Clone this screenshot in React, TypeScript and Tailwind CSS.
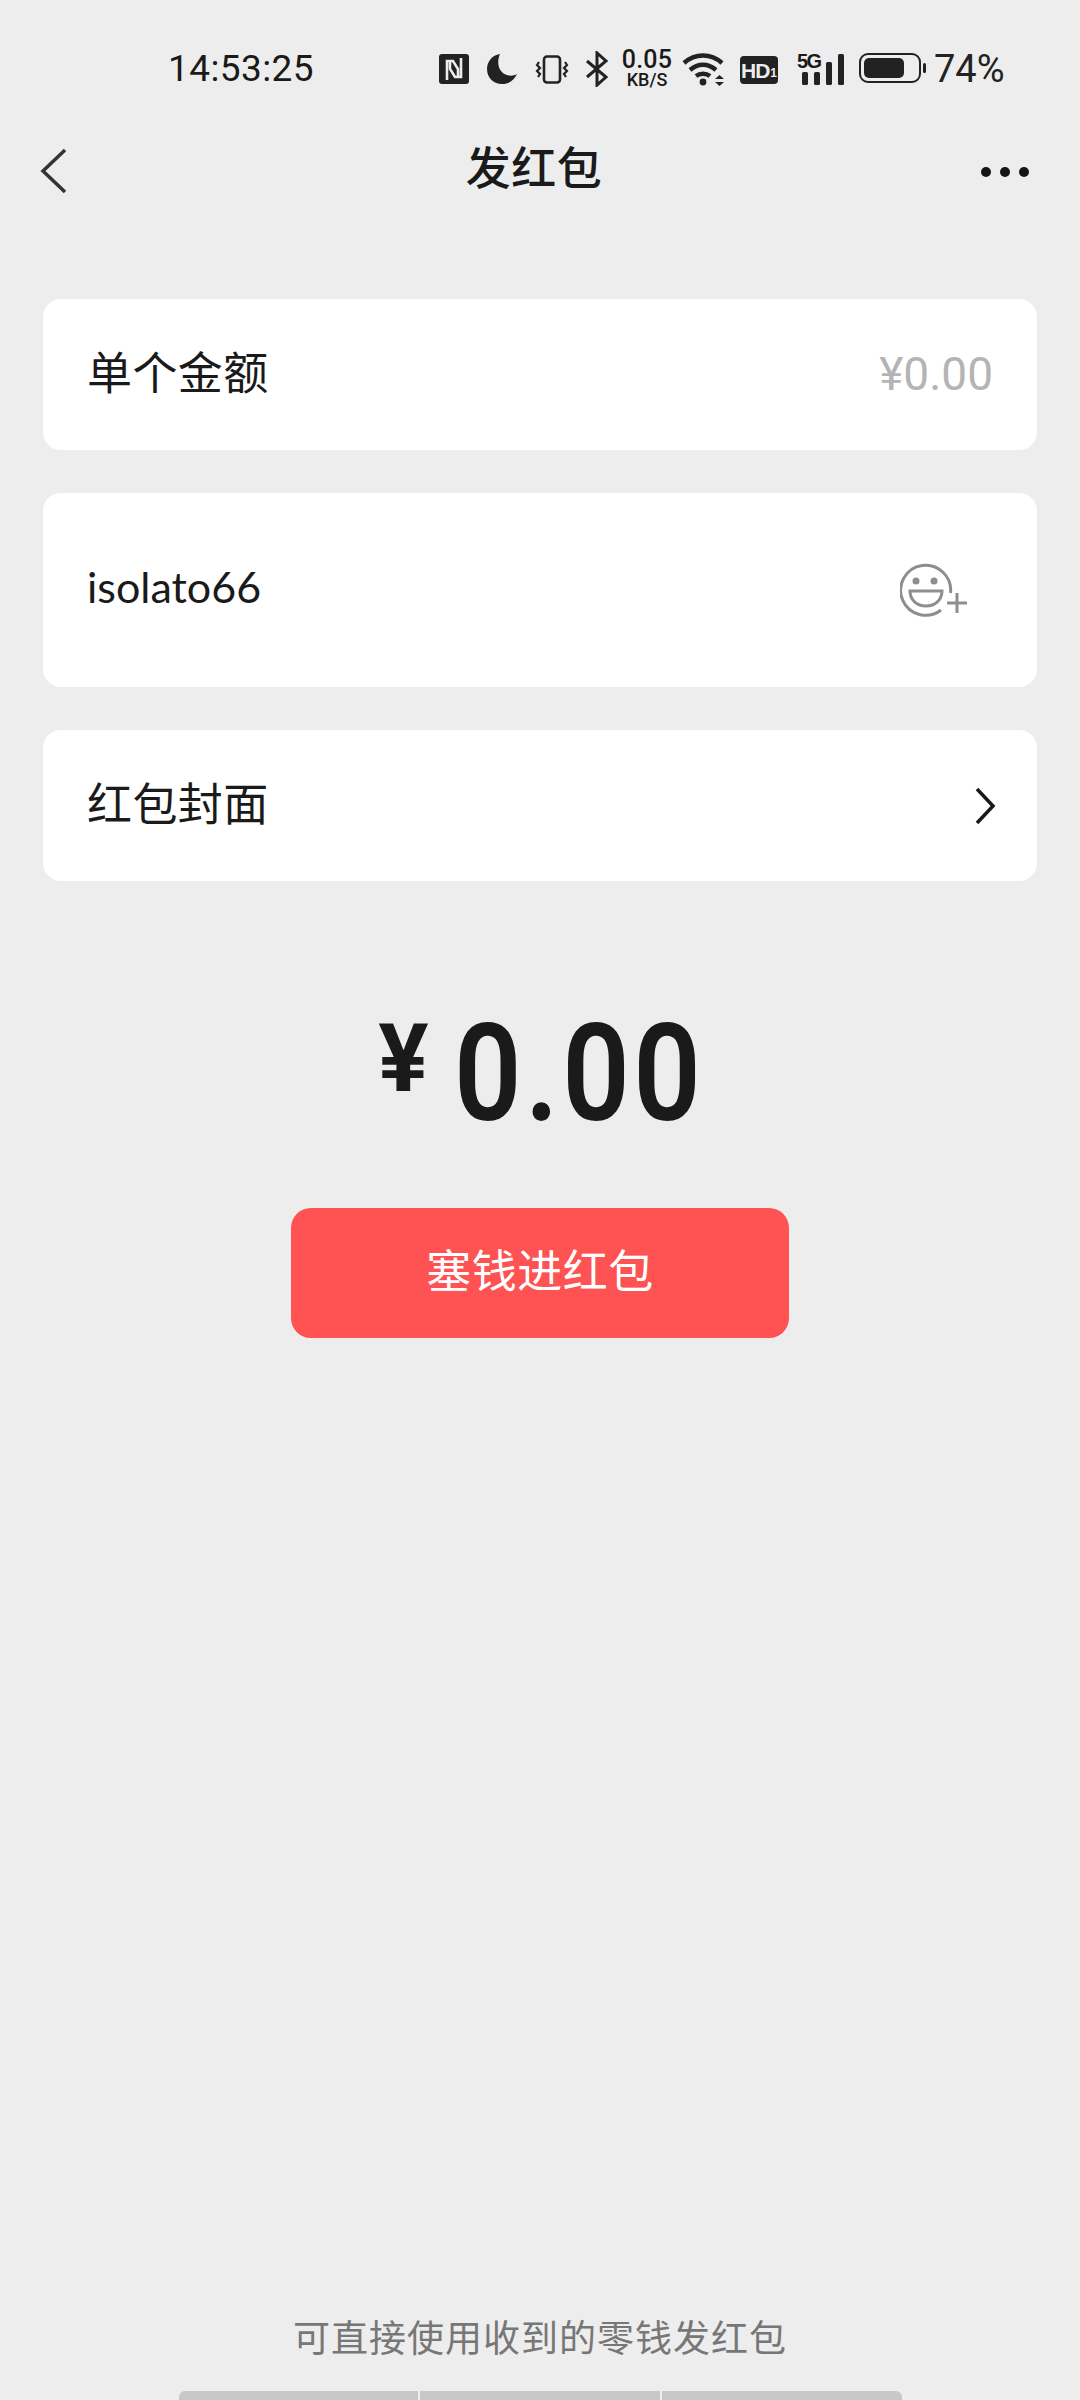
const sans = "font-['Roboto','Noto_Sans_CJK_SC',sans-serif]";

function StatusBar() {
  return (
    <div className="h-[106px] pt-[50px] pl-[168px] flex items-start text-[#1a1a1a]">
      <span className="text-[37px] leading-[38px] w-[271px] tracking-[0.4px]">14:53:25</span>
      {/* NFC */}
      <svg width="30" height="30" viewBox="0 0 30 30" className="mt-[4px]">
        <rect width="30" height="30" rx="3" fill="#222" />
        <path d="M8 26V7h6l5 8v8M22 4v19h-6l-5-8V7" fill="none" stroke="#ededed" strokeWidth="2.6" />
      </svg>
      {/* moon */}
      <svg width="30" height="30" viewBox="0 0 30 30" className="ml-[18px] mt-[4px]">
        <path d="M13 0C5 1 0 8 0 15c0 9 7 15 15 15 7 0 12-4 15-10-3 2-7 2-10 1C12 19 9 9 13 0z" fill="#222" />
      </svg>
      {/* vibrate */}
      <svg width="34" height="30" viewBox="0 0 34 30" className="ml-[18px] mt-[5px]" fill="none" stroke="#222">
        <rect x="9" y="1.500" width="16" height="26" rx="3" strokeWidth="2.600" />
        <path d="M4 7l-2 3 3 3-3 3 3 3-2 3M30 7l2 3-3 3 3 3-3 3 2 3" strokeWidth="2.200" />
      </svg>
      {/* bluetooth */}
      <svg width="22" height="36" viewBox="0 0 22 36" className="ml-[17px] mt-[1px]" fill="none" stroke="#222" strokeWidth="3">
        <path d="M1 10l19 16-9 8V2l9 8L1 26" />
      </svg>
      <div className="ml-[13px] w-[52px] flex flex-col items-center font-['Roboto'] font-medium">
        <span className="text-[25px] leading-[20px] tracking-[0.2px]">0.05</span>
        <span className="text-[18px] leading-[14px] mt-[3px]">KB/S</span>
      </div>
      {/* wifi */}
      <svg width="44" height="34" viewBox="0 0 44 34" className="ml-[9px] mt-[2px]" fill="none" stroke="#222" strokeWidth="4.400">
        <path d="M2 11c11-10 27-10 38 0M8 18c8-7 18-7 26 0M14 24c4-3 10-3 14 0" />
        <circle cx="21" cy="30" r="3.400" fill="#222" stroke="none" />
        <path d="M33 27h9l-4.500-4zM33 30h9l-4.500 4z" fill="#222" stroke="none" />
      </svg>
      <div className="ml-[14px] mt-[6px] w-[38px] h-[28px] rounded-[4px] bg-[#222] flex items-center justify-center text-[#ededed] font-['Liberation_Sans'] font-bold leading-none">
        <span className="text-[21px] tracking-[-1px]">HD</span>
        <span className="text-[12px] mt-[5px] ml-[1px]">1</span>
      </div>
      {/* 5G + signal */}
      <div className="relative ml-[19px] w-[48px] h-[34px] mt-[2px]">
        <span className="absolute left-0 top-[-1px] text-[20px] leading-[20px] font-bold font-['Liberation_Sans'] tracking-[-1.500px]">5G</span>
        <svg width="48" height="34" viewBox="0 0 48 34" className="absolute left-0 top-0">
          <rect x="5" y="20" width="6" height="13" rx="1.500" fill="#222" />
          <rect x="17" y="20" width="6" height="13" rx="1.500" fill="#222" />
          <rect x="29" y="10" width="6" height="23" rx="1.500" fill="#222" />
          <rect x="41" y="2" width="6" height="31" rx="1.500" fill="#222" />
        </svg>
      </div>
      {/* battery */}
      <svg width="67" height="30" viewBox="0 0 67 30" className="ml-[14px] mt-[3px]">
        <rect x="1" y="1" width="60" height="28" rx="8" fill="none" stroke="#222" strokeWidth="2" />
        <rect x="5" y="5" width="40" height="20" rx="5" fill="#222" />
        <rect x="64" y="10" width="3" height="10" rx="1.500" fill="#222" />
      </svg>
      <span className="ml-[8px] text-[38px] leading-[38px] text-[#222]">74%</span>
    </div>
  );
}

function NavBar() {
  return (
    <div className="relative h-[128px] flex items-start justify-center">
      <h1 className="mt-[31px] pr-[12px] text-[45px] leading-[66px] tracking-[0.5px] font-medium text-[#1a1a1a]">发红包</h1>
      <svg width="28" height="48" viewBox="0 0 28 48" className="absolute left-[40px] top-[41px]" fill="none" stroke="#333" strokeWidth="3.500">
        <path d="M25 3L3 24l22 21" />
      </svg>
      <div className="absolute right-[51px] top-[61px] flex gap-[9px]">
        <span className="w-[10px] h-[10px] rounded-full bg-[#151515]" />
        <span className="w-[10px] h-[10px] rounded-full bg-[#151515]" />
        <span className="w-[10px] h-[10px] rounded-full bg-[#151515]" />
      </div>
    </div>
  );
}

export default function App() {
  return (
    <div className={`w-[1080px] h-[2400px] bg-[#ededed] flex flex-col overflow-hidden ${sans}`}>
      <StatusBar />
      <NavBar />

      <div className="mt-[65px] mx-[43px] flex flex-col gap-[43px]">
        <div className="h-[151px] bg-white rounded-[18px] pl-[44px] pr-[44px] flex items-center justify-between">
          <span className="text-[45px] tracking-[0.4px] text-[#1a1a1a]">单个金额</span>
          <span className="text-[46px] text-[#b4b4b4]">¥0.00</span>
        </div>
        <div className="h-[194px] bg-white rounded-[18px] pl-[44px] pr-[69px] pt-[70px] flex items-start justify-between">
          <span className="text-[43px] leading-[48px] text-[#1a1a1a] font-['Lato']">isolato66</span>
          <svg width="68" height="54" viewBox="0 0 68 54" fill="none" stroke="#8e8e8e" strokeWidth="3">
            <path d="M50.500 30A25 25 0 1 0 41 47" />
            <circle cx="16" cy="18" r="3.500" fill="#8e8e8e" stroke="none" />
            <circle cx="34" cy="18" r="3.500" fill="#8e8e8e" stroke="none" />
            <path d="M10 28h32c0 9-7 15-16 15s-16-6-16-15z" />
            <path d="M47 40h20M57 30v20" />
          </svg>
        </div>
        <div className="h-[151px] bg-white rounded-[18px] pl-[44px] pr-[41px] flex items-center justify-between">
          <span className="text-[45px] tracking-[0.4px] text-[#1a1a1a]">红包封面</span>
          <svg width="22" height="38" viewBox="0 0 22 38" fill="none" stroke="#1a1a1a" strokeWidth="3.500">
            <path d="M3 2l16 17L3 36" />
          </svg>
        </div>
      </div>

      <div className="mt-[125px] flex items-start justify-center text-[#1a1a1a] font-['Roboto'] font-medium">
        <span className="text-[94px] leading-[100px] mt-[3px] mr-[25px] font-bold">¥</span>
        <span className="w-[248px] text-[136px] leading-[136px] tracking-[4px] whitespace-nowrap origin-left scale-x-[0.87] font-semibold">
          0.00
        </span>
      </div>

      <button className="mt-[66px] mx-auto w-[498px] h-[130px] rounded-[20px] bg-[#ff5252] text-white text-[45px] tracking-[0.5px]">
        塞钱进红包
      </button>

      <p className="mt-auto mb-[26px] text-center text-[37px] leading-[50px] tracking-[1px] text-[#777]">
        可直接使用收到的零钱发红包
      </p>
      <div className="mx-auto w-[723px] h-[9px] flex gap-[2px] overflow-hidden rounded-t-[6px]">
        <div className="flex-1 bg-[#c8c8c8]" />
        <div className="flex-1 bg-[#c8c8c8]" />
        <div className="flex-1 bg-[#c8c8c8]" />
      </div>
    </div>
  );
}
